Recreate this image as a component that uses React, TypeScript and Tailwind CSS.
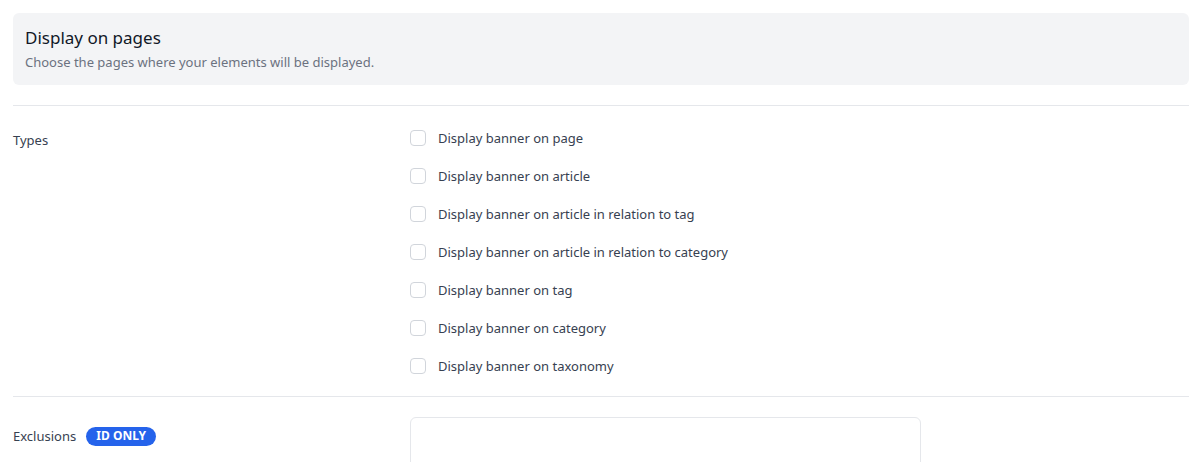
const types = [
  'Display banner on page',
  'Display banner on article',
  'Display banner on article in relation to tag',
  'Display banner on article in relation to category',
  'Display banner on tag',
  'Display banner on category',
  'Display banner on taxonomy',
];

export default function App() {
  return (
    <div
      className="min-h-screen bg-white px-[13px] pt-[13px] text-[13px] text-[#374151]"
      style={{ fontFamily: '"Segoe UI", "Noto Sans", sans-serif' }}
    >
      <div className="rounded-md bg-[#f3f4f6] px-3 pt-[13px] pb-[13px]">
        <h2 className="text-[17px] leading-6 text-[#111827]">Display on pages</h2>
        <p className="mt-[2px] text-[13px] leading-5 text-[#6b7280]">
          Choose the pages where your elements will be displayed.
        </p>
      </div>

      <div className="mt-5 border-t border-[#e5e7eb]" />

      <div className="flex pt-[16px] pb-[20px]">
        <div className="w-[397px] pt-[8px] leading-5">Types</div>
        <div className="flex flex-col gap-[18px] pt-[6px]">
          {types.map((t) => (
            <label key={t} className="flex h-5 items-center gap-3 leading-5">
              <span className="h-4 w-4 rounded-[4px] border border-[#d1d5db] bg-white" />
              <span>{t}</span>
            </label>
          ))}
        </div>
      </div>

      <div className="border-t border-[#e5e7eb]" />

      <div className="flex pt-5">
        <div className="flex w-[397px] items-center gap-[10px] self-start pt-[9px]">
          <span className="leading-5">Exclusions</span>
          <span className="flex h-[19px] w-[70px] items-center justify-center rounded-full bg-[#2563eb] text-[12px] font-bold text-white">
            ID ONLY
          </span>
        </div>
        <div className="h-[60px] w-[511px] rounded-md border border-[#e5e7eb] bg-white" />
      </div>
    </div>
  );
}
